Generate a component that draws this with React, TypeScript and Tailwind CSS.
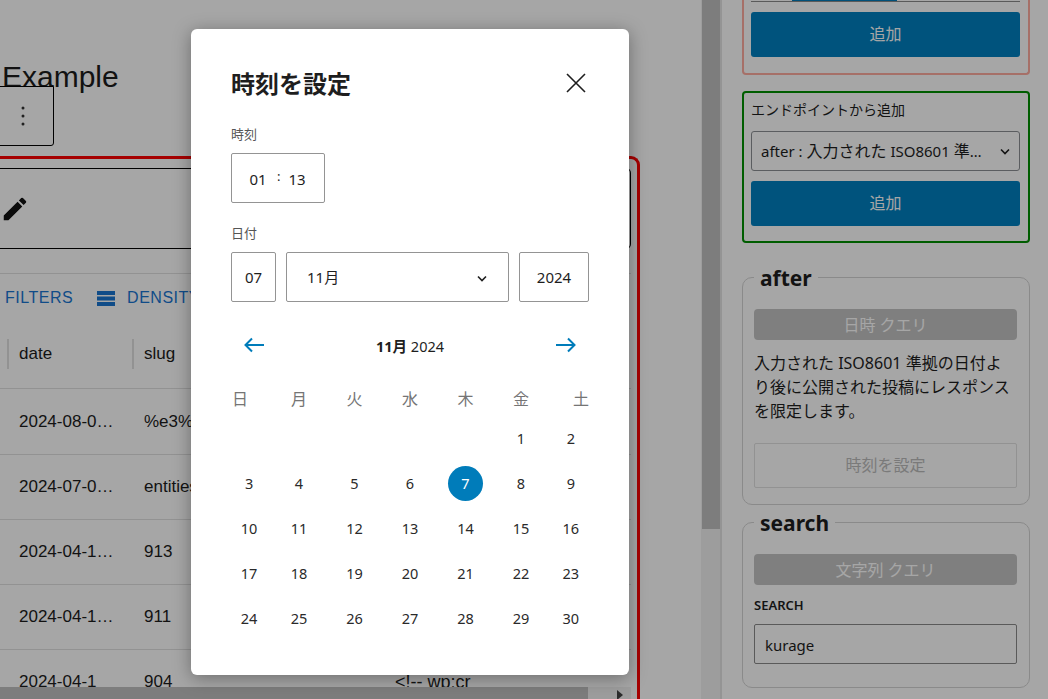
import React from "react";

const UI = "font-['Noto_Sans','Noto_Sans_CJK_JP',sans-serif]";
const weekdays = ["日", "月", "火", "水", "木", "金", "土"];
const days: (number | null)[] = [null, null, null, null, null, 1, 2];
for (let d = 3; d <= 30; d++) days.push(d);
const rows = [
  ["2024-08-0…", "%e3%81%8f%e3%82%89%e3%81%92", ""],
  ["2024-07-0…", "entities", ""],
  ["2024-04-1…", "913", ""],
  ["2024-04-1…", "911", ""],
  ["2024-04-1", "904", "<!-- wp:cr"],
];

function Fieldset({ legend, children, className }: { legend: string; children: React.ReactNode; className: string }) {
  return (
    <fieldset className={`w-[288px] rounded-[10px] border border-[#d4d4d4] pl-[11px] pr-[12px] pt-[16px] ${className}`}>
      <legend className="ml-0 px-1.5 pt-[2px] text-[21px] font-bold leading-[30px] text-[#1e1e1e]">{legend}</legend>
      {children}
    </fieldset>
  );
}

function Badge({ children }: { children: React.ReactNode }) {
  return (
    <div className="flex h-[31px] items-center justify-center rounded-[4px] bg-[#c4c4c4] text-[16px] text-white">{children}</div>
  );
}

function AddButton() {
  return (
    <div className="flex h-[45px] items-center justify-center rounded-[3px] bg-[#0080c0] pb-[2px] text-[16px] text-white">追加</div>
  );
}

function Chevron() {
  return (
    <svg width="14" height="8" viewBox="0 0 14 8" fill="none" stroke="#1e1e1e" strokeWidth="1.6" className="mt-[2px] shrink-0">
      <path d="M3 1.5 7 5.5 11 1.5" />
    </svg>
  );
}

function Main() {
  return (
    <div className="flex h-full w-[701px] shrink-0 flex-col overflow-hidden font-['Liberation_Sans',Arial,sans-serif] text-[#1c1c1c]">
      <div className="ml-[2px] h-[86px] pt-[57px] text-[30px] leading-[40px]">Example</div>
      <div className="-ml-[10px] flex h-[60px] w-[64px] items-center justify-center rounded-br-[3px] border border-black bg-white pl-[2px]">
        <svg width="6" height="24" viewBox="0 0 6 24" fill="#333">
          <circle cx="3" cy="4" r="1.5" />
          <circle cx="3" cy="12" r="1.5" />
          <circle cx="3" cy="20" r="1.5" />
        </svg>
      </div>
      <div className="-ml-[20px] mt-[10px] flex w-[660px] min-h-0 flex-1 flex-col overflow-hidden rounded-tr-[9px] border-r-[3px] border-t-[3px] border-[#ff0000] pl-[20px] pr-[6px] pt-[9px]">
        <div className="flex h-[81px] shrink-0 items-center rounded-r-[5px] border-y border-r border-black">
          <svg width="30" height="30" viewBox="0 0 24 24" fill="#111">
            <path d="M3 17.25V21h3.75L17.81 9.94l-3.75-3.75L3 17.25zM20.71 7.04c.39-.39.39-1.02 0-1.41l-2.34-2.34a.9959.9959 0 0 0-1.41 0l-1.83 1.83 3.75 3.75 1.83-1.83z" />
          </svg>
        </div>
        <div className="mt-[24px] flex min-h-0 flex-1 flex-col border-t border-[#e0e0e0]">
          <div className="flex h-[48px] shrink-0 items-center pl-[5px] text-[16px] tracking-[0.5px] text-[#1976d2]">
            <span>FILTERS</span>
            <svg width="18" height="15" viewBox="0 0 18 15" fill="#1976d2" className="ml-[24px] shrink-0">
              <rect y="0" width="18" height="4" />
              <rect y="5.5" width="18" height="4" />
              <rect y="11" width="18" height="4" />
            </svg>
            <span className="ml-[12px]">DENSITY</span>
          </div>
          <div className="flex min-h-0 flex-1 flex-col overflow-hidden text-[17px]">
            <div className="flex h-[67px] shrink-0 items-center border-b border-[#e0e0e0] pb-[2px] pl-[7px]">
              <div className="h-[30px] w-[2px] bg-[#e0e0e0]" />
              <div className="w-[123px] pl-[10px]">date</div>
              <div className="h-[30px] w-[2px] bg-[#e0e0e0]" />
              <div className="pl-[10px]">slug</div>
            </div>
            {rows.map((r, i) => (
              <div key={i} className={`flex shrink-0 items-center border-b border-[#e0e0e0] pl-[19px] ${i === 0 ? "h-[66px]" : "h-[65px]"}`}>
                <div className="w-[125px] whitespace-nowrap">{r[0]}</div>
                <div className="w-[251px] whitespace-nowrap">{r[1]}</div>
                <div className="whitespace-nowrap text-[18px]">{r[2]}</div>
              </div>
            ))}
          </div>
          <div className="flex h-[12px] shrink-0 items-center bg-[#f1f1f1]">
            <div className="h-full w-[588px] bg-[#c1c1c1]" />
            <svg width="6" height="10" viewBox="0 0 6 10" fill="#444" className="ml-[29px] mt-[3px]">
              <path d="M0 0 6 5 0 10z" />
            </svg>
          </div>
        </div>
      </div>
    </div>
  );
}

function Sidebar() {
  return (
    <div className={`flex h-full flex-1 flex-col overflow-hidden border-l-2 border-[#e4e4e4] pl-[20px] text-[#1e1e1e] ${UI}`}>
      <div className="w-[288px] rounded-b-[4px] border-x-2 border-b-2 border-[#ffaca0] pb-[16px] pl-[7px] pr-[8px]">
        <div className="flex h-[2px] border-b border-[#8a8a8a] bg-white">
          <div className="ml-[41px] h-full w-[105px] bg-[#007cba]" />
        </div>
        <div className="mt-[10px]">
          <AddButton />
        </div>
      </div>
      <div className="mt-[16px] w-[288px] rounded-[4px] border-2 border-[#009000] pb-[15px] pl-[7px] pr-[8px] pt-[7px]">
        <div className="text-[14px] leading-[20px]">エンドポイントから追加</div>
        <div className="mt-[11px] flex h-[40px] items-center rounded-[3px] border border-[#8c8f94] pl-[9px] pr-[7px] text-[15px]">
          <span className="flex-1 truncate">
            after : <span className="text-[16px]">入力された</span> ISO8601 <span className="text-[16px]">準拠の日付より後に公開</span>
          </span>
          <span className="ml-[12px]"><Chevron /></span>
        </div>
        <div className="mt-[10px]">
          <AddButton />
        </div>
      </div>
      <Fieldset legend="after" className="mt-[18px] pb-[16px]">
        <Badge>日時 クエリ</Badge>
        <p className="mt-[11px] text-[16px] leading-[24px]">入力された ISO8601 準拠の日付より後に公開された投稿にレスポンスを限定します。</p>
        <div className="mt-[20px] flex h-[45px] items-center justify-center rounded-[2px] border border-[#e0e0e0] pb-[2px] text-[16px] text-[#bcbcbc]">時刻を設定</div>
      </Fieldset>
      <Fieldset legend="search" className="mt-[1px] pb-[23px]">
        <Badge>文字列 クエリ</Badge>
        <div className="mt-[10px] text-[13px] font-semibold leading-[20px]">SEARCH</div>
        <div className="mt-[9px] flex h-[40px] items-center rounded-[2px] border border-[#8a8a8a] pl-[10px] pt-[2px] text-[15px]">kurage</div>
      </Fieldset>
    </div>
  );
}

function Modal() {
  return (
    <div className={`h-[646px] w-[438px] rounded-[6px] bg-white px-[40px] pt-[40px] text-[#1e1e1e] shadow-[0_3px_18px_rgba(0,0,0,0.35)] ${UI}`}>
      <div className="flex h-[30px] items-center justify-between">
        <h1 className="text-[24px] font-bold leading-[30px]">時刻を設定</h1>
        <svg width="20" height="20" viewBox="0 0 20 20" fill="none" stroke="#1e1e1e" strokeWidth="1.6" className="mb-[2px] mr-[3px]">
          <path d="M1 1 19 19M19 1 1 19" />
        </svg>
      </div>
      <div className="mt-[25px] text-[13px] leading-[20px] text-[#555]">時刻</div>
      <div className="relative mt-[9px] flex h-[50px] w-[94px] items-center rounded-[2px] border border-[#949494] pt-[2px] text-[15px]">
        <span className="w-[52px] text-center">01</span>
        <span className="w-[26px] text-center">13</span>
        <span className="absolute left-[45px] top-[12px] text-[13px] leading-[20px]">:</span>
      </div>
      <div className="mt-[20px] text-[13px] leading-[20px] text-[#555]">日付</div>
      <div className="mt-[9px] flex h-[50px] gap-[10px] text-[15px]">
        <div className="flex w-[45px] items-center justify-center rounded-[2px] border border-[#949494] pt-px">07</div>
        <div className="flex w-[223px] items-center justify-between rounded-[2px] border border-[#949494] pl-[20px] pr-[19px] pt-px">
          <span>11月</span>
          <Chevron />
        </div>
        <div className="flex w-[70px] items-center justify-center rounded-[2px] border border-[#949494] pt-px">2024</div>
      </div>
      <div className="mt-[27px] flex h-[32px] items-center justify-between px-[13px]">
        <svg width="20" height="16" viewBox="0 0 20 16" fill="none" stroke="#007cba" strokeWidth="2">
          <path d="M20 8H1.5M8 1.5 1.5 8 8 14.5" />
        </svg>
        <div className="pt-[3px] text-[14.5px]">
          <b>11月</b> 2024
        </div>
        <svg width="20" height="16" viewBox="0 0 20 16" fill="none" stroke="#007cba" strokeWidth="2">
          <path d="M0 8H18.5M12 1.5 18.5 8 12 14.5" />
        </svg>
      </div>
      <div className="mt-[26px] grid h-[24px] grid-cols-[1fr_repeat(5,55.5px)_1fr] items-center text-[16px] text-[#757575]">
        {weekdays.map((w, i) => (
          <div key={w} className={i === 0 ? "pl-px text-left" : i === 6 ? "text-right" : "text-center"}>
            {w}
          </div>
        ))}
      </div>
      <div className="mt-[5px] grid grid-cols-[1fr_repeat(5,55.5px)_1fr] text-[14.5px] text-[#2a2a2a]">
        {days.map((d, i) => {
          const col = i % 7;
          return (
            <div key={i} className={`flex h-[45px] items-center justify-center ${col === 0 ? "pr-[4px]" : col === 6 ? "pl-[4px]" : ""}`}>
              {d === 7 ? (
                <span className="flex h-[35px] w-[35px] items-center justify-center rounded-full bg-[#007cba] text-white">7</span>
              ) : (
                d
              )}
            </div>
          );
        })}
      </div>
    </div>
  );
}

export default function App() {
  return (
    <div className="relative flex h-[699px] w-[1048px] overflow-hidden bg-white">
      <Main />
      <div className="h-full w-[19px] shrink-0 bg-[#f1f1f1]">
        <div className="ml-px h-[529px] w-[18px] bg-[#c1c1c1]" />
      </div>
      <Sidebar />
      <div className="absolute inset-0 bg-black/35 pl-[191px] pt-[29px]">
        <Modal />
      </div>
    </div>
  );
}
